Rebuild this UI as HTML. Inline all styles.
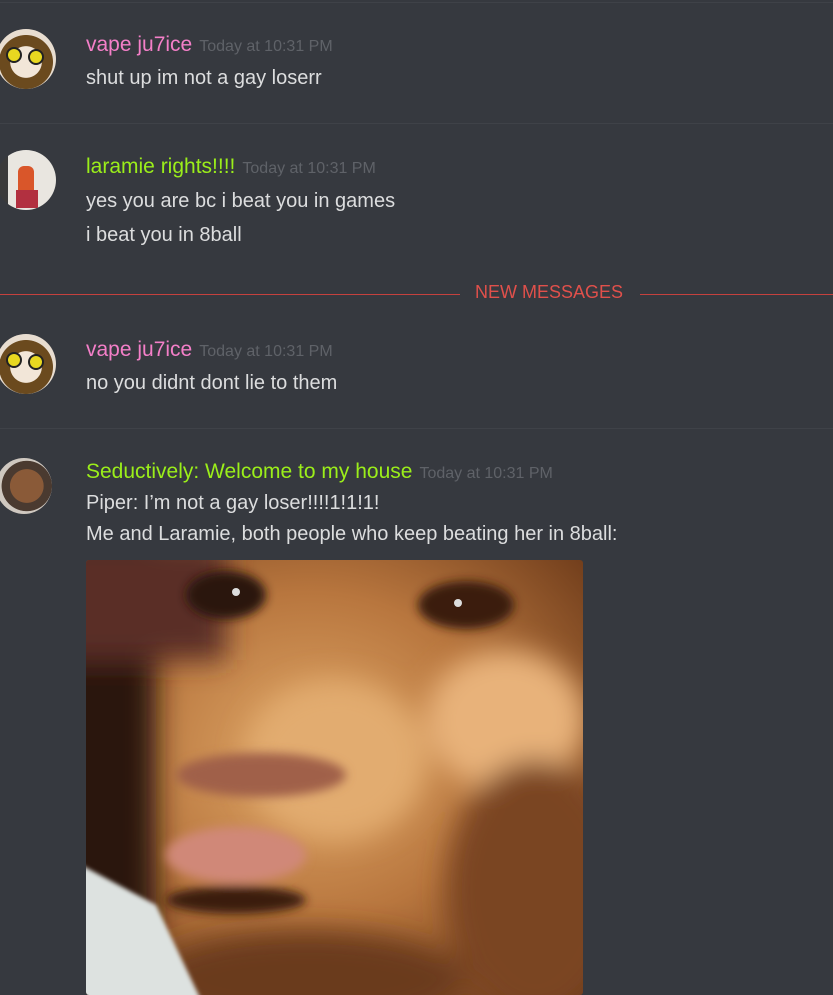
<!DOCTYPE html>
<html><head><meta charset="utf-8"><style>
body{margin:0;width:833px;height:995px;overflow:hidden;background:#36393f;font-family:"Liberation Sans",sans-serif;position:relative}
.a{position:absolute}
.hr{position:absolute;left:0;width:833px;height:1px;background:#3f4248}
.name{font-size:21px;position:absolute;left:86px;white-space:nowrap}
.ts{font-size:16px;color:#5f6268;margin-left:7px}
.msg{position:absolute;left:86px;font-size:20px;color:#dcddde;line-height:34px;white-space:nowrap}
.av{position:absolute;border-radius:50%;overflow:hidden}
</style></head><body>
<div class="hr" style="top:2px"></div>
<div class="av" style="left:-4px;top:29px;width:60px;height:60px;background:radial-gradient(circle at 50% 55%,#f2e6d8 0 35%,#6b4a1e 36% 60%,#e8ddd0 61%)">
 <div class="a" style="left:10px;top:18px;width:12px;height:12px;border-radius:50%;background:#e8d820;border:2px solid #222"></div>
 <div class="a" style="left:32px;top:20px;width:12px;height:12px;border-radius:50%;background:#e8d820;border:2px solid #222"></div>
</div>
<div class="name" style="top:33px;color:#f47fc8">vape ju7ice<span class="ts">Today at 10:31 PM</span></div>
<div class="msg" style="top:61px">shut up im not a gay loserr</div>
<div class="hr" style="top:123px"></div>
<div class="av" style="left:-4px;top:150px;width:60px;height:60px;background:linear-gradient(90deg,#3a3a3a 0 20%,#e9e6e0 20%)">
 <div class="a" style="left:22px;top:16px;width:16px;height:30px;background:#d9562a;border-radius:6px"></div>
 <div class="a" style="left:20px;top:40px;width:22px;height:18px;background:#b23040"></div>
</div>
<div class="name" style="top:155px;color:#9bee1a">laramie rights!!!!<span class="ts">Today at 10:31 PM</span></div>
<div class="msg" style="top:184px">yes you are bc i beat you in games<br>i beat you in 8ball</div>
<div class="a" style="left:0;top:294px;width:460px;height:1px;background:#c5413e"></div>
<div class="a" style="left:640px;top:294px;width:193px;height:1px;background:#c5413e"></div>
<div class="a" style="left:475px;top:282px;font-size:18px;color:#e0504b">NEW MESSAGES</div>
<div class="av" style="left:-4px;top:334px;width:60px;height:60px;background:radial-gradient(circle at 50% 55%,#f2e6d8 0 35%,#6b4a1e 36% 60%,#e8ddd0 61%)">
 <div class="a" style="left:10px;top:18px;width:12px;height:12px;border-radius:50%;background:#e8d820;border:2px solid #222"></div>
 <div class="a" style="left:32px;top:20px;width:12px;height:12px;border-radius:50%;background:#e8d820;border:2px solid #222"></div>
</div>
<div class="name" style="top:338px;color:#f47fc8">vape ju7ice<span class="ts">Today at 10:31 PM</span></div>
<div class="msg" style="top:366px">no you didnt dont lie to them</div>
<div class="hr" style="top:428px"></div>
<div class="av" style="left:-4px;top:458px;width:56px;height:56px;background:radial-gradient(circle at 55% 50%,#8a5a38 0 40%,#4a3a30 41% 60%,#cfc8c0 61%)"></div>
<div class="name" style="top:460px;color:#9bee1a">Seductively: Welcome to my house<span class="ts">Today at 10:31 PM</span></div>
<div class="msg" style="top:488px;line-height:31px">Piper: I’m not a gay loser!!!!1!1!1!<br>Me and Laramie, both people who keep beating her in 8ball:</div>
<svg class="a" style="left:86px;top:560px;border-radius:3px" width="497" height="435" viewBox="0 0 497 435">
<defs>
<clipPath id="c"><rect width="497" height="435"/></clipPath>
<filter id="b" x="-50%" y="-50%" width="200%" height="200%"><feGaussianBlur stdDeviation="14"/></filter>
<filter id="s" x="-50%" y="-50%" width="200%" height="200%"><feGaussianBlur stdDeviation="5"/></filter>
<filter id="t"><feGaussianBlur stdDeviation="2"/></filter>
<radialGradient id="sk" cx="45%" cy="45%" r="75%"><stop offset="0" stop-color="#e0a868"/><stop offset="0.5" stop-color="#b8763e"/><stop offset="1" stop-color="#6a3818"/></radialGradient>
</defs>
<g clip-path="url(#c)">
<rect width="497" height="435" fill="url(#sk)"/>
<g filter="url(#b)">
<rect x="-60" y="-60" width="130" height="560" fill="#2a1410"/>
<rect x="-40" y="-20" width="180" height="120" fill="#5a2e28"/>
<ellipse cx="250" cy="200" rx="90" ry="80" fill="#e2ac70"/>
<ellipse cx="420" cy="160" rx="80" ry="70" fill="#e8b27a"/>
<ellipse cx="450" cy="330" rx="90" ry="130" fill="#7a4420"/>
<ellipse cx="220" cy="420" rx="160" ry="50" fill="#6a3a1c"/>
</g>
<g filter="url(#s)">
<ellipse cx="140" cy="35" rx="40" ry="24" fill="#2a1410"/>
<ellipse cx="380" cy="45" rx="48" ry="24" fill="#3a1a10"/>
<ellipse cx="175" cy="215" rx="85" ry="22" fill="#a06048"/>
<ellipse cx="150" cy="295" rx="70" ry="28" fill="#d08878"/>
<ellipse cx="150" cy="340" rx="70" ry="14" fill="#3a1a10"/>
</g>
<path d="M-5,305 L70,345 L115,440 L-5,440 Z" fill="#dde2e0" filter="url(#t)"/>
<circle cx="150" cy="32" r="4" fill="#ddd"/>
<circle cx="372" cy="43" r="4" fill="#ddd"/>
</g>
</svg>
</body></html>
